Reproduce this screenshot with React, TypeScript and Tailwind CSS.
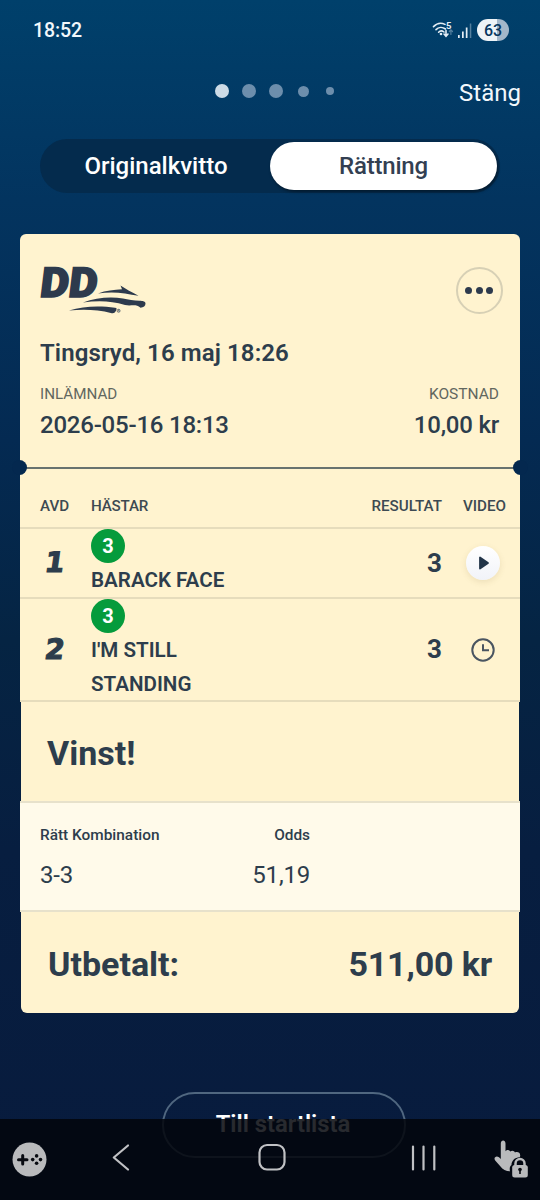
import clsx from "clsx";

const PageDots = () => {
  // ==== first dot is the active one ========//
  const dots = [
    { id: 1, style: "w-[13.5px] h-[13.5px] bg-[#cddbe6]" },
    { id: 2, style: "w-[13.5px] h-[13.5px] bg-[#6d8eac]" },
    { id: 3, style: "w-[13.5px] h-[13.5px] bg-[#6d8eac]" },
    { id: 4, style: "w-[11px] h-[11px] bg-[#6d8eac]" },
    { id: 5, style: "w-2 h-2 bg-[#6d8eac]" },
  ];

  return (
    <ul className="flex items-center">
      {dots.map((dot) => (
        <li key={dot.id} className="flex w-[27px] justify-center">
          <span className={clsx("rounded-full", dot.style)} />
        </li>
      ))}
    </ul>
  );
};

const StatusBar = () => (
  <div className="flex h-[60px] items-center justify-between pl-[33px] pr-[31px]">
    <p className="mt-0.5 text-[19.5px] font-medium leading-6 tracking-[-0.1px] text-[#f2f8fc]">
      18:52
    </p>
    <div className="flex items-center">
      <svg width="22" height="18" viewBox="0 0 22 18" fill="none">
        <g stroke="#e4edf4" strokeWidth="1.6" strokeLinecap="round">
          <path d="M1.500 5.600C5 2 9.500 1.600 13 3.400" />
          <path d="M4 8.600C6.500 6 10.500 5.700 13.500 8" />
          <path d="M6.600 11.200C8 9.700 10.300 9.600 12 11" />
          <path d="M14 9.500v5.300M12 13l2 2.200 2-2.200" />
          <path d="M18.900 13.500V9M17.300 10.500L18.900 8.800l1.600 1.700" stroke="#55809f" strokeWidth="1.200" />
        </g>
        <circle cx="9" cy="13" r="1.300" fill="#e4edf4" />
        <text x="14" y="8" fontSize="9.500" fontWeight="700" fill="#e4edf4">
          5
        </text>
      </svg>
      <svg className="ml-[3px]" width="15" height="17" viewBox="0 0 15 17">
        <g fill="#e4edf4">
          <rect x="1" y="13" width="1.700" height="3" />
          <rect x="5" y="9.500" width="1.700" height="6.500" />
          <rect x="8.800" y="5.500" width="1.700" height="10.500" />
          <rect x="12.800" y="1.500" width="1.500" height="14.500" fill="#55809f" />
        </g>
      </svg>
      <div className="ml-[5px] flex h-[22px] w-[32px] items-center justify-center rounded-full bg-linear-to-r from-[#eef4f8] from-[64%] to-[#a3b7ca] to-[64%] pt-px text-[16px] font-medium leading-none text-[#06365f]">
        63
      </div>
    </div>
  </div>
);

const DDLogo = () => (
  <svg className="-ml-px overflow-visible" width="110" height="54" viewBox="0 0 110 54" fill="#2d3a4d">
    <text
      transform="translate(0 36) skewX(-7)"
      fontFamily="Roboto, sans-serif"
      fontSize="41.500"
      fontWeight="900"
      textLength="57"
      lengthAdjust="spacingAndGlyphs"
      stroke="#2d3a4d"
      strokeWidth="1.600"
    >
      DD
    </text>
    <path d="M59 32.500C67 29.500 75 28.800 83 28.300L81.500 24.500L90 29.800C93.500 31.500 96.500 33 99.500 34.800C95 34.200 90.500 33.500 86 32.500C77 31 68 31 59 32.500Z" />
    <path d="M44 41.500C57 36.500 72 35.600 84 37.500C89 38.700 95 39.800 100.500 39.800C104 39.900 106.500 40.500 106.500 42.500C106.500 45 104.500 46.500 101.500 46.700C97 42.500 92 45.500 86 44C72 39.500 58 39.500 44 41.500Z" />
    <path d="M30 49.500C45 44.800 62 44.800 76 46.800C78 47 77.800 48 77.200 49.300C76.200 51.500 75.200 52.500 72.800 52.200C58 48.500 45 48.200 30 49.500Z" />
    <circle cx="79.600" cy="49.800" r="1.500" fill="none" stroke="#2d3a4d" strokeWidth="0.600" />
    <text x="78.800" y="50.900" fontSize="2.800">
      R
    </text>
  </svg>
);

const MoreButton = () => (
  <button className="flex h-[47px] w-[47px] items-center justify-center gap-[3.5px] rounded-full border-2 border-[#d7d0b5]">
    <span className="h-[7px] w-[7px] rounded-full bg-[#2d3a4d]" />
    <span className="h-[7px] w-[7px] rounded-full bg-[#2d3a4d]" />
    <span className="h-[7px] w-[7px] rounded-full bg-[#2d3a4d]" />
  </button>
);

const PlayIcon = () => (
  <div className="flex h-[34px] w-[34px] items-center justify-center rounded-full bg-linear-to-b from-white to-[#f1f3f9] shadow-[0_2px_6px_rgba(120,100,40,0.14)]">
    <svg className="ml-[3px]" width="12" height="16" viewBox="0 0 12 16">
      <path
        d="M2 2.500v11L10 8z"
        fill="#223448"
        stroke="#223448"
        strokeWidth="1.800"
        strokeLinejoin="round"
      />
    </svg>
  </div>
);

const ClockIcon = () => (
  <svg width="26" height="26" viewBox="0 0 26 26" fill="none" stroke="#4a5561" strokeWidth="2">
    <circle cx="13" cy="13" r="10.700" />
    <path d="M13 7.300v6h6" />
  </svg>
);

const legs = [
  { id: 1, horse: "BARACK FACE", number: 3, result: 3, height: "h-[70px]", video: true },
  { id: 2, horse: "I'M STILL STANDING", number: 3, result: 3, height: "h-[103px]", video: false },
];

const Receipt = () => (
  <section className="mx-5 mt-[41px] h-[779px] rounded-md text-[#2d3d4c]">
    {/* ============= HEADER */}
    <div className="h-[234px] rounded-t-md bg-[#fff3cf] px-5 pt-[27px]">
      <div className="-mr-[2.5px] flex h-[54px] items-start justify-between">
        <DDLogo />
        <div className="mt-[6px]">
          <MoreButton />
        </div>
      </div>
      <h1 className="mt-[24px] text-[24px] font-semibold leading-7 tracking-[0.1px]">
        Tingsryd, 16 maj 18:26
      </h1>
      <div className="mt-[17px] flex justify-between pr-px">
        <div>
          <p className="text-[15.2px] leading-5 text-[#62675f]">INLÄMNAD</p>
          <p className="mt-[7px] text-[24px] font-medium leading-7 tracking-[-0.22px]">
            2026-05-16 18:13
          </p>
        </div>
        <div className="text-right">
          <p className="text-[15.5px] leading-5 text-[#62675f]">KOSTNAD</p>
          <p className="mt-[7px] text-[24px] font-medium leading-7 tracking-[-0.22px]">10,00 kr</p>
        </div>
      </div>
    </div>

    {/* ============= PERFORATION */}
    <div className="relative h-0">
      <div className="absolute inset-x-0 -top-px h-0.5 bg-[#68726f]" />
      <div className="absolute -left-2 -top-2 h-[15px] w-[15px] rounded-full bg-[#04284f]" />
      <div className="absolute -right-2 -top-2 h-[15px] w-[15px] rounded-full bg-[#04284f]" />
    </div>

    {/* ============= LEGS */}
    <div className="bg-[#fff3cf]">
      <div className="flex h-[61px] items-center border-b-2 border-[#e6dcbc] pl-5 pt-[17px] text-[15.2px] font-medium text-[#3d4a52]">
        <p className="w-[51px]">AVD</p>
        <p className="flex-1 tracking-[-0.2px]">HÄSTAR</p>
        <p>RESULTAT</p>
        <p className="w-[78px] pr-3.5 text-right">VIDEO</p>
      </div>
      {legs.map((leg) => (
        <div
          key={leg.id}
          className={clsx("flex items-center border-b-2 border-[#e6dcbc]", leg.height)}
        >
          <p className="w-[71px] pr-0.5 text-center font-['DejaVu_Sans'] text-[28px] font-bold leading-none [-webkit-text-stroke:1.2px_#2d3d4c]">
            <span className="inline-block -skew-x-8">{leg.id}</span>
          </p>
          <div className="flex-1 self-start">
            <span className="flex h-[34px] w-[34px] items-center justify-center rounded-full bg-[#059b3c] text-[20px] font-bold text-white">
              {leg.number}
            </span>
            <p className="w-[160px] text-[20.6px] font-semibold leading-[34px]">{leg.horse}</p>
          </div>
          <p className="text-[26px] font-bold">{leg.result}</p>
          <div className="flex w-[78px] justify-center pl-[3px]">
            {leg.video ? <PlayIcon /> : <ClockIcon />}
          </div>
        </div>
      ))}
    </div>

    {/* ============= PAYOUT */}
    <div className="mx-px flex h-[99px] items-center bg-[#fff3cf] pl-[26px] pt-[3px]">
      <h2 className="text-[34px] font-bold">Vinst!</h2>
    </div>
    <div className="h-[111px] border-y-2 border-[#e7e1cb] bg-[#fffaea] px-5 pt-[22px]">
      <div className="flex w-[270px] justify-between text-[15.4px] font-medium leading-5">
        <p>Rätt Kombination</p>
        <p>Odds</p>
      </div>
      <div className="mt-[15px] flex w-[270px] justify-between text-[24px] leading-[30px] tracking-[-0.2px]">
        <p>3-3</p>
        <p>51,19</p>
      </div>
    </div>
    <div className="mx-px flex h-[100.5px] items-center justify-between rounded-b-md bg-[#fff3cf] px-[27px] pt-1 text-[34px] font-bold">
      <p>Utbetalt:</p>
      <p className="tracking-[-0.15px]">511,00 kr</p>
    </div>
  </section>
);

const SystemNav = () => (
  <div className="absolute inset-x-0 bottom-0 h-[81px] bg-[#02050b]/85">
    <svg width="540" height="81" viewBox="0 0 540 81" fill="none">
      {/* game tools */}
      <circle cx="29.500" cy="40.500" r="17" fill="#b9babc" />
      <path d="M18.500 40.800h8.500M22.700 36.500v8.600" stroke="#080b11" strokeWidth="3" strokeLinecap="round" />
      <g fill="#080b11">
        <circle cx="36.600" cy="36.900" r="1.800" />
        <circle cx="36.600" cy="44.300" r="1.800" />
        <circle cx="32.700" cy="40.600" r="1.800" />
        <circle cx="40.500" cy="40.600" r="1.800" />
      </g>
      {/* back, home, recents */}
      <g stroke="#c0c1c4" strokeWidth="2.200" strokeLinecap="round" strokeLinejoin="round">
        <path d="M128 26.500L113.800 38.500L128 50.500" />
        <rect x="259.500" y="26" width="25" height="24.500" rx="7.500" />
        <path d="M413 27.500v23M423.500 27.500v23M434.300 27.500v23" />
      </g>
      {/* touch lock */}
      <path
        d="M500.800 24.500C500.800 20.500 505.500 20.500 505.500 24.500V32.200C507 30.200 509.500 30.800 510.300 32.600C512 31 514.300 31.800 515 33.500C517 32.500 520.500 33 520.200 37L519.800 38.200C515 38 511.300 42 511.500 46C509.500 47 509.500 50.500 510 52.300C506 52.200 502.500 50.500 500.500 47.500L495.200 41.500C493 38.500 496.500 36 499 38.300L500.800 40Z"
        fill="#b9babc"
      />
      <path d="M515.500 47v-2.500a4.500 4.500 0 0 1 9 0V47" stroke="#b9babc" strokeWidth="2.500" />
      <rect x="512.200" y="46" width="15.600" height="12.500" rx="2.500" fill="#b9babc" />
      <circle cx="520" cy="50.600" r="1.800" fill="#080b11" />
      <path d="M520 51v4" stroke="#080b11" strokeWidth="1.600" />
    </svg>
  </div>
);

export default function App() {
  return (
    <main className="relative h-[1200px] w-[540px] overflow-hidden bg-[linear-gradient(to_bottom,#00406b_0px,#03345f_200px,#042a52_440px,#052443_640px,#071e40_850px,#081b3d_1200px)] font-[Roboto,sans-serif]">
      <StatusBar />
      <div className="flex h-[62px] items-center justify-between pl-[208.5px] pr-[19px]">
        <PageDots />
        <button className="mt-[3px] text-[24px] text-[#f2f8fc]">Stäng</button>
      </div>
      <div className="mx-10 mt-[17px] flex h-[54px] items-center rounded-full bg-[#042b4d] pr-[3px] text-[24px] font-medium">
        <button className="w-[230px] pl-0.5 text-white">Originalkvitto</button>
        <button className="h-[48px] w-[227px] rounded-full bg-white tracking-[-0.2px] text-[#333f52] shadow-[1px_2px_3px_rgba(0,0,0,0.4)]">
          Rättning
        </button>
      </div>
      <Receipt />
      <div className="mt-[79px] flex justify-center pl-[27px]">
        <button className="h-[66px] w-[244px] rounded-full border-2 border-[#506780] pr-px text-[23.8px] font-semibold text-white">
          Till startlista
        </button>
      </div>
      <SystemNav />
    </main>
  );
}
